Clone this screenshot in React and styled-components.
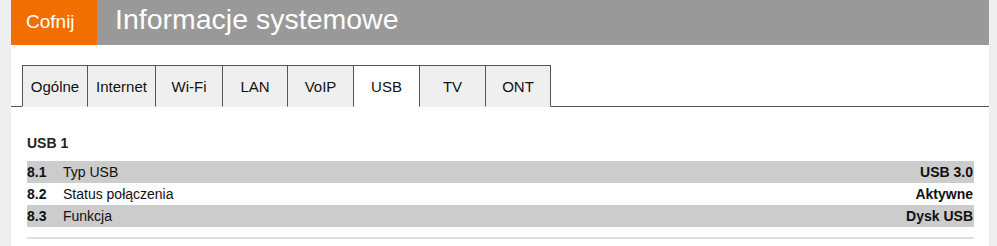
import React from 'react'
import styled, { createGlobalStyle } from 'styled-components'

const GlobalStyle = createGlobalStyle`
  html, body {
    margin: 0;
    padding: 0;
    background: #efefef;
    font-family: "Liberation Sans", Arial, sans-serif;
  }
`

const tabs = [
  { name: 'Ogólne', w: 65 },
  { name: 'Internet', w: 68 },
  { name: 'Wi-Fi', w: 67 },
  { name: 'LAN', w: 65 },
  { name: 'VoIP', w: 66 },
  { name: 'USB', w: 66 },
  { name: 'TV', w: 66 },
  { name: 'ONT', w: 66 },
]

const rows = [
  { num: '8.1', label: 'Typ USB', value: 'USB 3.0', shaded: true },
  { num: '8.2', label: 'Status połączenia', value: 'Aktywne', shaded: false },
  { num: '8.3', label: 'Funkcja', value: 'Dysk USB', shaded: true },
]

const App = () => {
  return (
    <>
      <GlobalStyle />
      <Panel>
        <Header>
          <BackButton>Cofnij</BackButton>
          <Title>Informacje systemowe</Title>
        </Header>
        <TabBar>
          {tabs.map((t) => (
            <Tab key={t.name} w={t.w} active={t.name === 'USB'}>{t.name}</Tab>
          ))}
        </TabBar>
        <Content>
          <SectionTitle>USB 1</SectionTitle>
          <Table>
            {rows.map((r) => (
              <Row key={r.num} shaded={r.shaded}>
                <Num>{r.num}</Num>
                <Label>{r.label}</Label>
                <Value>{r.value}</Value>
              </Row>
            ))}
          </Table>
          <Divider />
        </Content>
      </Panel>
    </>
  )
}

export default App

const Panel = styled.div`
  margin-left: 11px;
  width: 978px;
  height: 246px;
  background: #fff;
`

const Header = styled.div`
  display: flex;
  height: 45px;
  background: #999;
`

const BackButton = styled.div`
  width: 86px;
  box-sizing: border-box;
  padding: 0 0 1px 15px;
  background: #f16e00;
  color: #fff;
  font-size: 19px;
  display: flex;
  align-items: center;
`

const Title = styled.h1`
  margin: 0;
  padding: 0 0 6px 18px;
  color: #fff;
  font-weight: normal;
  font-size: 28.5px;
  display: flex;
  align-items: center;
`

const TabBar = styled.div`
  display: flex;
  margin-top: 20px;
  padding-left: 11px;
  border-bottom: 1px solid #555;
`

const Tab = styled.div`
  width: ${(p) => p.w}px;
  height: 42px;
  box-sizing: border-box;
  margin-bottom: -1px;
  display: flex;
  align-items: center;
  justify-content: center;
  font-size: 15px;
  color: #111;
  white-space: nowrap;
  background: ${(p) => (p.active ? '#fff' : '#efefef')};
  border-top: 1px solid #555;
  border-left: 1px solid #555;
  border-bottom: 1px solid ${(p) => (p.active ? '#fff' : '#efefef')};
  &:last-child {
    border-right: 1px solid #555;
  }
`

const Content = styled.div`
  padding: 0 15px 0 16px;
`

const SectionTitle = styled.div`
  margin: 28px 0 10px;
  font-size: 14px;
  font-weight: bold;
  color: #222;
`

const Table = styled.div`
  display: flex;
  flex-direction: column;
`

const Row = styled.div`
  display: flex;
  align-items: center;
  height: 22px;
  font-size: 14px;
  color: #111;
  background: ${(p) => (p.shaded ? '#cccccc' : '#fff')};
`

const Num = styled.span`
  width: 36px;
  font-weight: bold;
`

const Label = styled.span`
  flex: 1;
`

const Value = styled.span`
  font-weight: bold;
  padding-right: 1px;
`

const Divider = styled.div`
  margin-top: 10px;
  height: 2px;
  background: #dedede;
`
